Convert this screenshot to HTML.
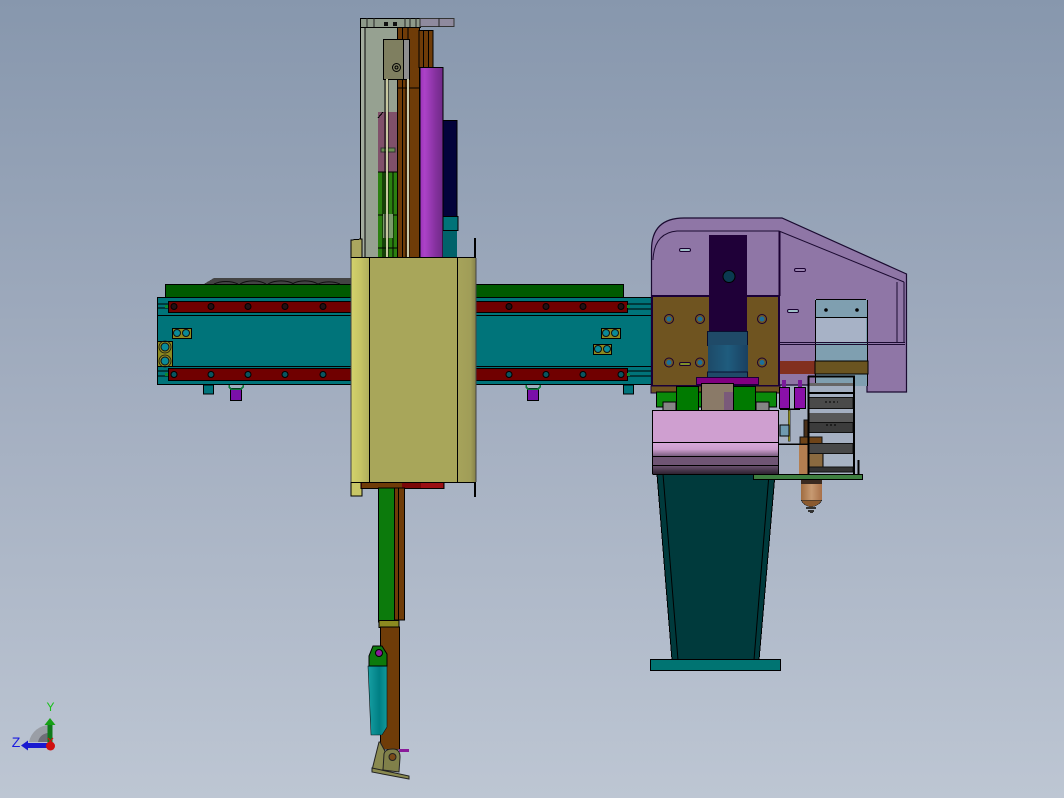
<!DOCTYPE html>
<html><head><meta charset="utf-8"><style>
html,body{margin:0;padding:0;width:1064px;height:798px;overflow:hidden;background:#a5b0c2}
svg{display:block}
</style></head><body>
<svg width="1064" height="798" viewBox="0 0 1064 798" xmlns="http://www.w3.org/2000/svg" stroke-linejoin="miter">
<defs>
<linearGradient id="bg" x1="0" y1="0" x2="0" y2="1"><stop offset="0" stop-color="#8797ad"/><stop offset=".5" stop-color="#a3aec0"/><stop offset="1" stop-color="#bdc6d3"/></linearGradient>
<linearGradient id="mag" x1="0" y1="0" x2="1" y2="0"><stop offset="0" stop-color="#9a34b8"/><stop offset=".2" stop-color="#ac42c8"/><stop offset=".7" stop-color="#83309c"/><stop offset="1" stop-color="#702a88"/></linearGradient>
<linearGradient id="yl" x1="0" y1="0" x2="1" y2="0"><stop offset="0" stop-color="#d3d26c"/><stop offset=".5" stop-color="#c6c464"/><stop offset="1" stop-color="#aeac5c"/></linearGradient>
<linearGradient id="yr" x1="0" y1="0" x2="1" y2="0"><stop offset="0" stop-color="#a6a35a"/><stop offset=".7" stop-color="#a09d58"/><stop offset="1" stop-color="#858048"/></linearGradient>
<linearGradient id="cyl" x1="0" y1="0" x2="1" y2="0"><stop offset="0" stop-color="#1d4a68"/><stop offset=".5" stop-color="#1f5c7e"/><stop offset="1" stop-color="#1a4060"/></linearGradient>
<linearGradient id="pk" x1="0" y1="0" x2="0" y2="1"><stop offset="0" stop-color="#d8a8da"/><stop offset=".5" stop-color="#cb9ccc"/><stop offset="1" stop-color="#7a5f80"/></linearGradient>
<linearGradient id="pk2" x1="0" y1="0" x2="0" y2="1"><stop offset="0" stop-color="#6f5574"/><stop offset="1" stop-color="#2e2230"/></linearGradient>
<linearGradient id="tc" x1="0" y1="0" x2="1" y2="0"><stop offset="0" stop-color="#17a0a4"/><stop offset=".6" stop-color="#007f84"/><stop offset="1" stop-color="#12999c"/></linearGradient>
<linearGradient id="cu" x1="0" y1="0" x2="1" y2="0"><stop offset="0" stop-color="#a06c40"/><stop offset=".5" stop-color="#c79a72"/><stop offset="1" stop-color="#a87048"/></linearGradient>
</defs>
<rect width="1064" height="798" fill="url(#bg)"/>

<!-- gantry beam -->
<g shape-rendering="crispEdges">
<path d="M204 284 L214 278 H351 V284Z" fill="#444"/>
<rect x="165.500" y="284.500" width="458" height="13" fill="#005a00" stroke="#000"/>
<rect x="157.500" y="297.500" width="495" height="87" fill="#00747a" stroke="#000"/>
<path d="M158 315.500H652M158 366.500H652" stroke="#000"/>
<rect x="168.500" y="301.500" width="459" height="11" fill="#700000" stroke="#000"/>
<rect x="168.500" y="368.500" width="459" height="12" fill="#700000" stroke="#000"/>
<path d="M158 304H168M158 308H168M158 371H168M158 376H168M627 304H652M627 309H652M627 371H652M627 376H652" stroke="#000" fill="none"/>
<rect x="165" y="305" width="3" height="3" fill="#0a8a30"/><rect x="165" y="373" width="3" height="3" fill="#0a8a30"/>
<rect x="627" y="305" width="3" height="3" fill="#0a8a30"/><rect x="627" y="373" width="3" height="3" fill="#0a8a30"/>
<rect x="157.500" y="341.500" width="15" height="25" fill="#8c8a20" stroke="#000"/>
<rect x="172.500" y="328.500" width="19" height="10" fill="#8c8a20" stroke="#000"/>
<rect x="601.500" y="328.500" width="19" height="10" fill="#8c8a20" stroke="#000"/>
<rect x="593.500" y="344.500" width="18" height="10" fill="#8c8a20" stroke="#000"/>
<rect x="203.500" y="385" width="10" height="9" fill="#00757c" stroke="#000"/>
<rect x="623.500" y="385" width="10" height="9" fill="#00757c" stroke="#000"/>
<rect x="230.500" y="388.500" width="11" height="12" fill="#7a10a8" stroke="#000"/>
<rect x="527.500" y="388.500" width="11" height="12" fill="#7a10a8" stroke="#000"/>
<path d="M229 385v2l2 2h10l2-2v-2M526 385v2l2 2h10l2-2v-2" fill="none" stroke="#0b7a3a" stroke-width="1.500"/>
</g>
<path d="M214 284a18 10 0 0 1 24 0M240 284a18 10 0 0 1 26 0M268 284a18 10 0 0 1 26 0M292 284a18 10 0 0 1 26 0M318 284a18 10 0 0 1 22 0" fill="none" stroke="#111"/>
<g fill="#241015" stroke="#000">
<circle cx="174" cy="306.500" r="3"/><circle cx="211" cy="306.500" r="3"/><circle cx="248" cy="306.500" r="3"/><circle cx="285" cy="306.500" r="3"/><circle cx="323" cy="306.500" r="3"/>
<circle cx="509" cy="306.500" r="3"/><circle cx="546" cy="306.500" r="3"/><circle cx="583" cy="306.500" r="3"/><circle cx="621" cy="306.500" r="3"/>
</g>
<g fill="#0a5560" stroke="#000">
<circle cx="174" cy="374.500" r="3"/><circle cx="211" cy="374.500" r="3"/><circle cx="248" cy="374.500" r="3"/><circle cx="285" cy="374.500" r="3"/><circle cx="323" cy="374.500" r="3"/>
<circle cx="509" cy="374.500" r="3"/><circle cx="546" cy="374.500" r="3"/><circle cx="583" cy="374.500" r="3"/><circle cx="621" cy="374.500" r="3"/>
</g>
<g fill="#0a8a98" stroke="#111">
<circle cx="165" cy="347" r="4"/><circle cx="165" cy="361" r="4"/>
<circle cx="177" cy="333" r="3.500"/><circle cx="186" cy="333" r="3.500"/>
<circle cx="606" cy="333" r="3.500"/><circle cx="615" cy="333" r="3.500"/>
<circle cx="598" cy="349" r="3.500"/><circle cx="607" cy="349" r="3.500"/>
</g>
<g fill="none" stroke="#111" stroke-width=".8">
<circle cx="165" cy="347" r="6"/><circle cx="165" cy="361" r="6"/>
</g>

<!-- upper column -->
<g shape-rendering="crispEdges">
<rect x="360.500" y="18.500" width="37" height="240" fill="#96a191" stroke="#000"/>
<rect x="361" y="19" width="4" height="239" fill="#a4ad9f"/>
<path d="M365 19V258" stroke="#000"/>
<rect x="378" y="112" width="19" height="60" fill="#80506a"/>
<rect x="378" y="172" width="20" height="86" fill="#2b8010"/>
<path d="M378 215H398M378 248H398M378 172H398M383 172V258M393 172V258" stroke="#000"/>
<rect x="383" y="214" width="10" height="24" fill="#7a9a6a"/>
<rect x="381" y="148" width="14" height="4" fill="#6a8f50" stroke="#333"/>
<path d="M378 118l5-6" stroke="#000"/>
<rect x="397.500" y="27" width="22" height="231" fill="#6f3c08" stroke="#000"/>
<path d="M402.500 27V258M408 27V258M397 88H420" stroke="#000" fill="none"/>
<rect x="419" y="30.500" width="14" height="37" fill="#6f3c08" stroke="#000"/>
<path d="M423.500 30V67M428.500 30V67" stroke="#000"/>
<rect x="420" y="67.500" width="23" height="190.500" fill="url(#mag)" stroke="#000" stroke-width=".6"/>
<rect x="443" y="120.500" width="14" height="96" fill="#03033a" stroke="#000"/>
<rect x="443" y="216.500" width="15" height="14" fill="#007378" stroke="#000"/>
<rect x="443" y="231" width="14" height="27" fill="#00626a"/>
<rect x="360.500" y="18.500" width="60" height="9" fill="#8e9a8a" stroke="#000"/>
<rect x="420" y="18.500" width="34" height="8" fill="#8f8a9e" stroke="#333"/>
<path d="M367 18V27M374 18V27M405 18V27M410 18V27M416 18V27M439 18V27" stroke="#222"/>
<rect x="384" y="22" width="4" height="4" fill="#111"/><rect x="393" y="22" width="4" height="4" fill="#111"/>
<rect x="383.500" y="39.500" width="20" height="40" fill="#7f7f60" stroke="#000"/>
<rect x="403.500" y="39.500" width="6" height="40" fill="#8f8f8f" stroke="#000"/>
<path d="M385 79V258M388 79V258M406 79V258M409 79V258" stroke="#000"/>
<rect x="386" y="79" width="2" height="179" fill="#c8c8a0"/><rect x="407" y="79" width="2" height="179" fill="#c8c8a8"/>
</g>
<circle cx="396.500" cy="67.500" r="4" fill="#7f7f60" stroke="#000"/><circle cx="396.500" cy="67.500" r="1.500" fill="none" stroke="#000"/>

<!-- yellow shroud -->
<g shape-rendering="crispEdges">
<path d="M351 240L362 239V258H351Z" fill="#aaa75f" stroke="#000"/>
<path d="M351 482H362V496H351Z" fill="#c8c666" stroke="#000"/>
<path d="M475 238V258M475 482V497" stroke="#000" stroke-width="2"/>
<rect x="361" y="481.500" width="83" height="7" fill="#7a0808" stroke="#000"/>
<rect x="362" y="482" width="40" height="6" fill="#6f3c08"/>
<rect x="421" y="482" width="22" height="6" fill="#9a0f14"/>
</g>
<rect x="351" y="258" width="19" height="224" fill="url(#yl)"/>
<rect x="370" y="258" width="88" height="224" fill="#a8a65a"/>
<rect x="458" y="258" width="18" height="224" fill="url(#yr)"/>
<g shape-rendering="crispEdges">
<path d="M351 257.500H476M351 482.500H476M369.500 258V482M457.500 258V482" stroke="#000"/>
<path d="M351 258V482M476 258V482" stroke="#444"/>
</g>

<!-- lower column -->
<g shape-rendering="crispEdges">
<rect x="378.500" y="488" width="16" height="134" fill="#0c7a0c" stroke="#000"/>
<rect x="394.500" y="488" width="10" height="132" fill="#6f3c08" stroke="#000"/>
<path d="M398.500 488V620" stroke="#000"/>
<rect x="379" y="620.500" width="20" height="7" fill="#8c8a20" stroke="#000"/>
<rect x="380.500" y="627" width="19" height="122" fill="#6f3c08" stroke="#000"/>
<rect x="399" y="749" width="10" height="3" fill="#8a1a9a"/>
</g>
<path d="M368 666H387V727L382 735H371Z" fill="url(#tc)" stroke="#111" stroke-width=".6"/>
<path d="M369 666V656L373 646H382L387 654V666Z" fill="#0c7a0c" stroke="#000"/>
<circle cx="379" cy="653" r="3.500" fill="#8a1a9a" stroke="#000"/>
<rect x="381" y="735" width="18" height="14" fill="#6f3c08"/>
<path d="M379 742L372 770H383L386 753L380 742Z" fill="#8a8a50" stroke="#222"/>
<path d="M384 754Q385 749 393 749Q400 749 400 757L399 772L383 770Z" fill="#80804a" stroke="#222"/>
<circle cx="392.500" cy="757" r="3.500" fill="#7a4a18" stroke="#222"/>
<path d="M372 768L409 776V779L372 772Z" fill="#8a8a50" stroke="#222"/>

<!-- purple cover -->
<path d="M651.500 392V250Q651.500 218 684 218H782L906.500 274V392H867V385H651.500Z" fill="#8f76a6" stroke="#1a0a30" stroke-width="1.200"/>
<g shape-rendering="crispEdges">
<rect x="815" y="299" width="52" height="87" fill="#7f9fb0"/>
<rect x="816" y="317" width="50" height="25" fill="#a7b2c6"/>
<path d="M816 299.500H866M815.500 300V386M867.500 300V386M815 317.500H867M815 342.500H867" stroke="#000"/>
<path d="M780 342.500H905M780 344.500H905" stroke="#1a0a30"/>
<rect x="780" y="361" width="35" height="13" fill="#82301f"/>
<rect x="815" y="361" width="53" height="13" fill="#6a5420" stroke="#000" stroke-width=".8"/>
<rect x="652" y="296" width="127" height="90" fill="#6f5420" stroke="#1a0038" stroke-width="2"/>
<rect x="651" y="386" width="129" height="7" fill="#6f5420" stroke="#1a0038"/>
<rect x="709" y="235" width="38" height="97" fill="#1f0038"/>
<rect x="707.500" y="331.500" width="40" height="14" fill="#1f4a68" stroke="#0a1030"/>
<rect x="708" y="345" width="40" height="27" fill="url(#cyl)"/>
<rect x="707.500" y="372" width="40" height="6" fill="#1f4a68" stroke="#0a1030"/>
<rect x="696.500" y="377.500" width="62" height="7" fill="#800080" stroke="#1a0038"/>
<path d="M779.500 231V296" stroke="#1a0030" stroke-width="2"/>
</g>
<path d="M653 260Q654 233 677 231H779L904 282M904 282V342M897 282V342" fill="none" stroke="#1a0a30"/>
<g fill="#a0c0c8" stroke="#1a0030">
<rect x="679.500" y="248.500" width="11" height="3" rx="1.500"/>
<rect x="794.500" y="268.500" width="11" height="3" rx="1.500" fill="#9a85b0"/>
<rect x="787.500" y="309.500" width="11" height="3" rx="1.500"/>
<rect x="679.500" y="362.500" width="11" height="3" rx="1.500" fill="#80902a"/>
</g>
<circle cx="729" cy="276.500" r="6" fill="#0a3a50" stroke="#000"/>
<g fill="#6f5420" stroke="#1a0030">
<circle cx="669" cy="319" r="4.500"/><circle cx="700" cy="319" r="4.500"/><circle cx="762" cy="319" r="4.500"/>
<circle cx="669" cy="362.500" r="4.500"/><circle cx="700" cy="362.500" r="4.500"/><circle cx="762" cy="362.500" r="4.500"/>
</g>
<g fill="#1c6f9a">
<circle cx="669" cy="319" r="2.500"/><circle cx="700" cy="319" r="2.500"/><circle cx="762" cy="319" r="2.500"/>
<circle cx="669" cy="362.500" r="2.500"/><circle cx="700" cy="362.500" r="2.500"/><circle cx="762" cy="362.500" r="2.500"/>
</g>
<circle cx="826" cy="310" r="1.800" fill="#000"/><circle cx="857" cy="310" r="1.800" fill="#000"/>

<!-- lower head -->
<g shape-rendering="crispEdges">
<rect x="656.500" y="392" width="120" height="15" fill="#0a8a0a" stroke="#000"/>
<rect x="663" y="402" width="13" height="9" fill="#858585" stroke="#000"/>
<rect x="756" y="402" width="13" height="9" fill="#858585" stroke="#000"/>
<rect x="676.500" y="386.500" width="22" height="24" fill="#007a00" stroke="#000"/>
<rect x="733.500" y="386.500" width="22" height="24" fill="#007a00" stroke="#000"/>
<rect x="701.500" y="383.500" width="32" height="27" fill="#8a7a68" stroke="#000"/>
<rect x="724" y="392" width="9" height="18" fill="#7a5a7a"/>
<rect x="779.500" y="387.500" width="10" height="21" fill="#8a10a8" stroke="#000"/>
<rect x="794.500" y="387.500" width="11" height="21" fill="#8a10a8" stroke="#000"/>
<rect x="782" y="380" width="4" height="7" fill="#7a1a9a"/><rect x="798" y="380" width="4" height="7" fill="#7a1a9a"/>
<path d="M657 474H775L759 660H672Z" fill="#003a3c" stroke="#000"/>
</g>
<path d="M663 474L678 660M769 474L754 660" fill="none" stroke="#000"/>
<g shape-rendering="crispEdges">
<rect x="650.500" y="659.500" width="130" height="11" fill="#007472" stroke="#000"/>
<rect x="652.500" y="410.500" width="126" height="32" fill="#cf9fd0" stroke="#000"/>
<rect x="653" y="443" width="125" height="13" fill="url(#pk)"/>
<rect x="653" y="456" width="125" height="9" fill="#6f5574"/>
<rect x="653" y="465" width="125" height="9" fill="url(#pk2)"/>
<path d="M652.500 442.500H779M652.500 456.500H779M652.500 465.500H779M652.500 474.500H779M652.500 410V474M778.500 410V474" stroke="#000"/>
<path d="M779 444H808M780 409H800" stroke="#000" stroke-width="1.500"/>
<rect x="788" y="410" width="2" height="31" fill="#8a8a20" stroke="#111" stroke-width=".4"/>
<rect x="780" y="425" width="9" height="11" fill="#6f9ab0" stroke="#000"/>
<!-- torch -->
<rect x="804" y="420" width="5" height="20" fill="#4a3018" stroke="#111"/>
<rect x="800" y="437" width="22" height="7" fill="#6f4418" stroke="#111"/>
<rect x="799" y="445" width="10" height="30" fill="#b47e50"/>
<rect x="808" y="452" width="15" height="16" fill="#8a6a40" stroke="#000"/>
<rect x="801" y="480" width="21" height="20" fill="url(#cu)"/>
<path d="M801 500Q804 506 811 507Q819 506 822 500Z" fill="#8a5a30" stroke="#222" stroke-width=".5"/>
<rect x="806" y="507" width="10" height="2" fill="#333"/><rect x="808" y="510" width="6" height="2" fill="#333"/><rect x="810" y="512" width="3" height="1" fill="#333"/>
<rect x="801" y="480" width="21" height="4" fill="#3a2a20"/>
<rect x="753.500" y="474.500" width="109" height="5" fill="#3f7f40" stroke="#000"/>
<!-- rack -->
<rect x="809" y="383" width="44" height="3" fill="#666"/>
<rect x="809" y="397.500" width="44" height="11" fill="#4a4a4a" stroke="#111"/>
<rect x="809" y="413" width="44" height="9" fill="#585858"/>
<rect x="809" y="422.500" width="44" height="10" fill="#3c3c3c" stroke="#111"/>
<rect x="809" y="443.500" width="44" height="10" fill="#484848" stroke="#111"/>
<rect x="809" y="467" width="44" height="5" fill="#333" stroke="#111"/>
<path d="M808 376.500H855M808.500 376V474M854 376V474M809 393H854M858.500 460V474" stroke="#000" stroke-width="2"/>
<path d="M825 402H838M826 425H836" stroke="#000" stroke-dasharray="2 2"/>
</g>

<!-- triad -->
<path d="M29 742A21 21 0 0 1 50 725V742Z" fill="#9a9ea6"/>
<path d="M38 742A11 11 0 0 1 50 733V742Z" fill="#6e6e78"/>
<rect x="47.500" y="724" width="5" height="19" fill="#0f7a1a"/>
<path d="M44.500 725L50 718L55.500 725Z" fill="#16a016"/>
<rect x="28" y="743" width="20" height="5" fill="#1a1ad0"/>
<path d="M28 740.500L21 745.500L28 750.500Z" fill="#1a1ad0"/>
<circle cx="50.500" cy="746" r="4.500" fill="#d01010"/>
<path d="M48 738L53 744M53 738L48 744" stroke="#d01010" stroke-width="1.200"/>
<text x="50.500" y="711" font-family="Liberation Sans, sans-serif" font-size="12" fill="#18c018" text-anchor="middle">Y</text>
<text x="16" y="747" font-family="Liberation Sans, sans-serif" font-size="14" fill="#1a1ae0" text-anchor="middle">Z</text>
</svg>
</body></html>
